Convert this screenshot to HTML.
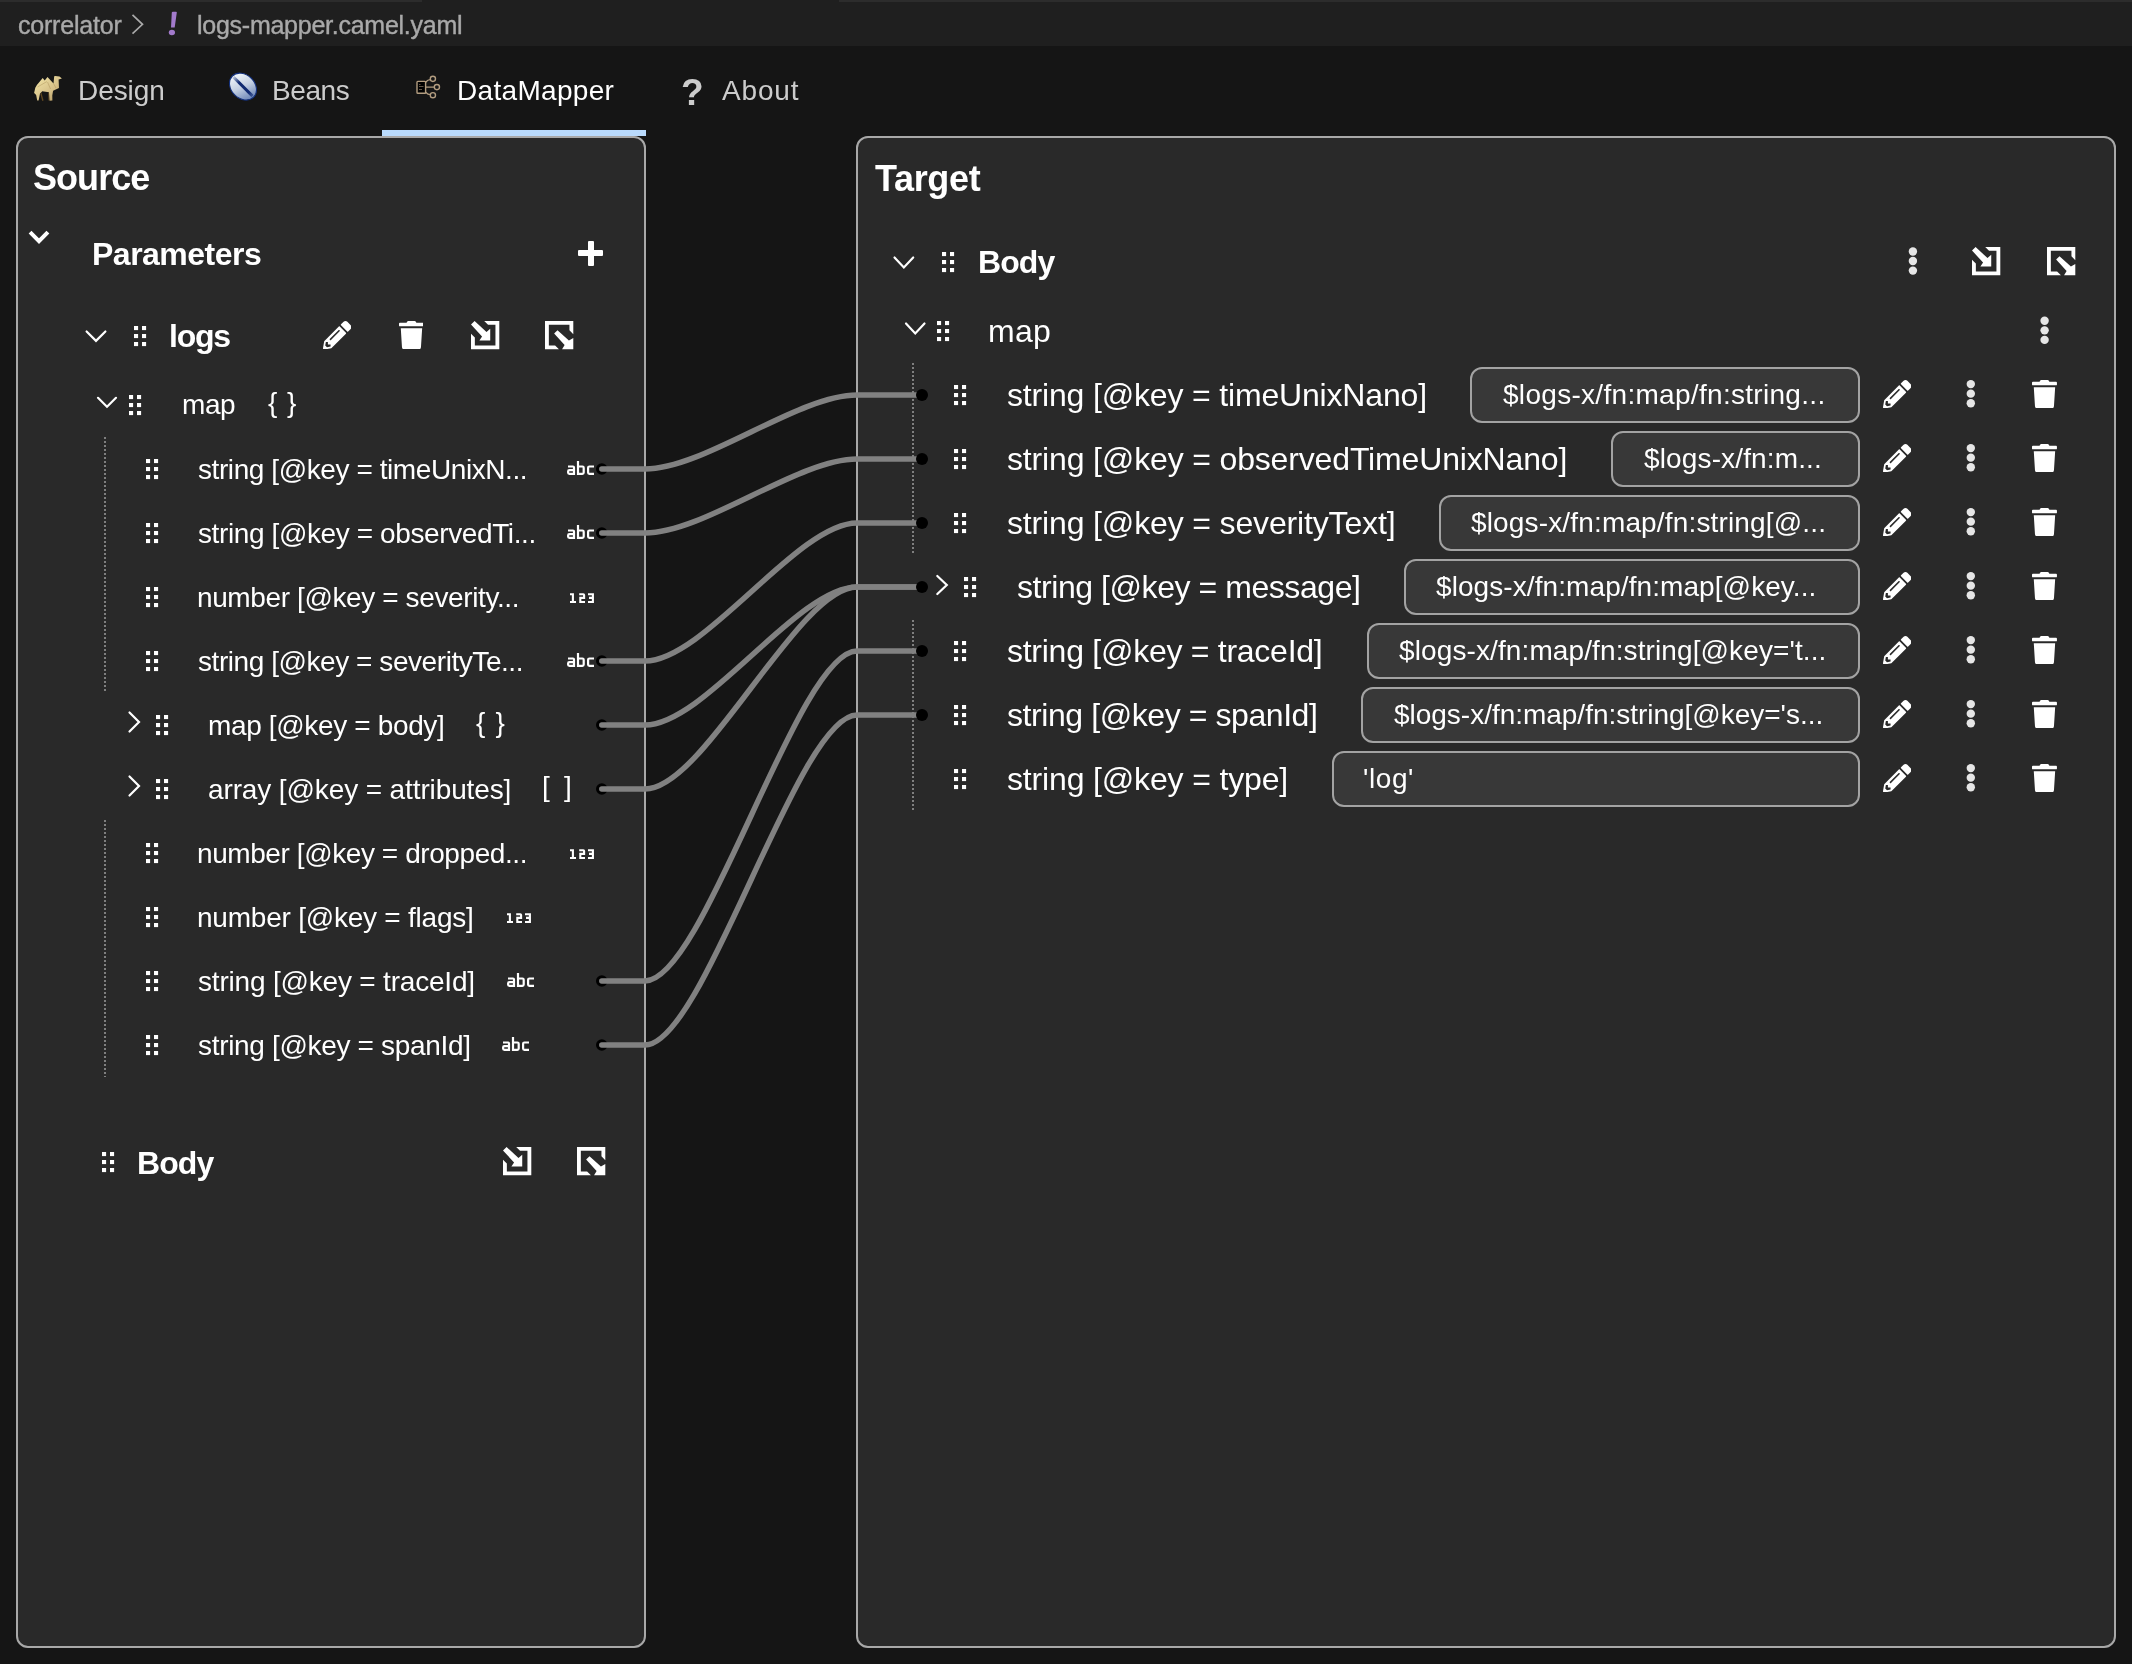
<!DOCTYPE html>
<html><head><meta charset="utf-8"><title>Kaoto DataMapper</title>
<style>html,body{margin:0;padding:0;background:#151515;width:2132px;height:1664px;overflow:hidden}
#root{position:relative;width:2132px;height:1664px;overflow:hidden;background:#151515;font-family:"Liberation Sans",sans-serif}</style></head>
<body><div id="root">
<div style="position:absolute;left:0;top:0;width:2132px;height:46px;background:#1f1f1f"></div><div style="position:absolute;left:0;top:0;width:422px;height:2px;background:#2c2c2c"></div><div style="position:absolute;left:839px;top:0;width:1293px;height:2px;background:#2c2c2c"></div><div style="position:absolute;left:16px;top:136px;width:630px;height:1512px;background:#292929;border-radius:12px"></div><div style="position:absolute;left:856px;top:136px;width:1260px;height:1512px;background:#292929;border-radius:12px"></div><div style="position:absolute;left:1470px;top:367px;width:390px;height:56px;box-sizing:border-box;background:#383838;border:2px solid #a3a3a3;border-radius:12px"></div><div style="position:absolute;left:1611px;top:431px;width:249px;height:56px;box-sizing:border-box;background:#383838;border:2px solid #a3a3a3;border-radius:12px"></div><div style="position:absolute;left:1439px;top:495px;width:421px;height:56px;box-sizing:border-box;background:#383838;border:2px solid #a3a3a3;border-radius:12px"></div><div style="position:absolute;left:1404px;top:559px;width:456px;height:56px;box-sizing:border-box;background:#383838;border:2px solid #a3a3a3;border-radius:12px"></div><div style="position:absolute;left:1366.5px;top:623px;width:493.5px;height:56px;box-sizing:border-box;background:#383838;border:2px solid #a3a3a3;border-radius:12px"></div><div style="position:absolute;left:1361.3px;top:687px;width:498.70000000000005px;height:56px;box-sizing:border-box;background:#383838;border:2px solid #a3a3a3;border-radius:12px"></div><div style="position:absolute;left:1331.5px;top:751px;width:528.5px;height:56px;box-sizing:border-box;background:#383838;border:2px solid #a3a3a3;border-radius:12px"></div><div style="position:absolute;left:104px;top:437px;width:2px;height:255px;background:repeating-linear-gradient(to bottom,#7f7f7f 0 2px,transparent 2px 4px)"></div><div style="position:absolute;left:104px;top:820px;width:2px;height:257px;background:repeating-linear-gradient(to bottom,#7f7f7f 0 2px,transparent 2px 4px)"></div><div style="position:absolute;left:912px;top:363px;width:2px;height:191px;background:repeating-linear-gradient(to bottom,#7f7f7f 0 2px,transparent 2px 4px)"></div><div style="position:absolute;left:912px;top:620px;width:2px;height:191px;background:repeating-linear-gradient(to bottom,#7f7f7f 0 2px,transparent 2px 4px)"></div><div style="position:absolute;left:382px;top:129.5px;width:264px;height:6.5px;background:#b9dafc"></div>
<div style="position:absolute;left:16px;top:136px;width:630px;height:1512px;box-sizing:border-box;border:2.2px solid #a8a8a8;border-radius:12px"></div><div style="position:absolute;left:856px;top:136px;width:1260px;height:1512px;box-sizing:border-box;border:2.2px solid #a8a8a8;border-radius:12px"></div>
<svg style="position:absolute;left:0;top:0" width="2132" height="1664"><g fill="#000"><circle cx="601.8" cy="469" r="5.8"/><circle cx="601.8" cy="533" r="5.8"/><circle cx="601.8" cy="661" r="5.8"/><circle cx="601.8" cy="725" r="5.8"/><circle cx="601.8" cy="789" r="5.8"/><circle cx="601.8" cy="981" r="5.8"/><circle cx="601.8" cy="1045" r="5.8"/></g><g fill="none" stroke="#818181" stroke-width="5.5" stroke-linecap="round"><path d="M601.8,469 H645 C704.36,469 797.64,395 857,395 H922"/><path d="M601.8,533 H645 C704.36,533 797.64,459 857,459 H922"/><path d="M601.8,661 H645 C704.36,661 797.64,523 857,523 H922"/><path d="M601.8,725 H645 C704.36,725 797.64,587 857,587 H922"/><path d="M601.8,789 H645 C704.36,789 797.64,587 857,587 H922"/><path d="M601.8,981 H645 C704.36,981 797.64,651 857,651 H922"/><path d="M601.8,1045 H645 C704.36,1045 797.64,715 857,715 H922"/></g><g fill="#000"><circle cx="922" cy="395" r="6"/><circle cx="922" cy="459" r="6"/><circle cx="922" cy="523" r="6"/><circle cx="922" cy="587" r="6"/><circle cx="922" cy="651" r="6"/><circle cx="922" cy="715" r="6"/></g></svg>
<svg style="position:absolute;left:0;top:0;overflow:visible" width="1" height="1"><polyline points="132.5,14.8 142.5,24.3 132.5,33.6" fill="none" stroke="#a9a9a9" stroke-width="1.7"/></svg><svg style="position:absolute;left:0;top:0;overflow:visible" width="1" height="1" fill="#a27acb"><path d="M171.8,12.4 Q172,11.8 172.8,11.8 H176 Q176.9,11.9 176.8,12.6 L174.7,27.4 H171 Z"/><ellipse cx="171.9" cy="32.5" rx="3.1" ry="2.7"/></svg><svg style="position:absolute;left:30px;top:70px;overflow:visible" width="36" height="34"><defs><linearGradient id="cg" x1="0" y1="0" x2="1" y2="1"><stop offset="0" stop-color="#f3e6a8"/><stop offset="0.6" stop-color="#d6c088"/><stop offset="1" stop-color="#a68a52"/></linearGradient></defs><path d="M11.3,22.3 L13.6,30.6 L12.2,30.9 L10.4,24 Z M18.2,22.4 L18.5,30.6 L19.6,30.6 L19.7,22.4 Z" fill="#5e4620"/><path d="M4.1,23.1 L5.3,17.8 L6.9,15.1 L12.7,8.0 L14.7,10.6 L17.5,6.9 L23.5,13.5 L24.2,6.3 L25.3,5.9 L29.5,6.5 L31.9,8.6 L28.6,9.4 L29,18 L23.1,20.8 L22.3,25.5 L22.4,30.6 L19.6,30.8 L19,22.2 L12.3,21.3 L10,23.5 L8.6,30.6 L7.2,30.6 L6.2,25.2 L5.3,24 Z" fill="url(#cg)"/><path d="M7.5,17 L17,11.5 M17.5,12 L20.5,19 M23.5,13.5 L26,18" stroke="#9c8048" stroke-width="0.6" opacity="0.6"/></svg><svg style="position:absolute;left:224px;top:68px;overflow:visible" width="38" height="36"><defs><linearGradient id="bg1" gradientUnits="userSpaceOnUse" x1="5" y1="14" x2="33" y2="23"><stop offset="0" stop-color="#f4f8fb"/><stop offset="0.5" stop-color="#c3cfe2"/><stop offset="1" stop-color="#6a84b6"/></linearGradient><linearGradient id="bs1" gradientUnits="userSpaceOnUse" x1="5" y1="0" x2="33" y2="0"><stop offset="0" stop-color="#0f2a74" stop-opacity="0.15"/><stop offset="0.3" stop-color="#102a72"/><stop offset="0.8" stop-color="#102a72"/><stop offset="1" stop-color="#0f2a74" stop-opacity="0.5"/></linearGradient></defs><g transform="rotate(45 19 18.6)"><ellipse cx="19" cy="18.6" rx="15" ry="11.8" fill="url(#bg1)" stroke="#13307c" stroke-width="1.1"/><path d="M5.5,18.6 H32.5" stroke="url(#bs1)" stroke-width="3"/></g></svg><svg style="position:absolute;left:410px;top:70px;overflow:visible" width="36" height="32" fill="none" stroke="#b39d80" stroke-width="1.4"><rect x="7" y="11.4" width="8.6" height="11.8" fill="#000" rx="0.8"/><path d="M15.6,17.1 H24.3 M15.6,12.2 Q18,9.5 20.4,9.6 M15.6,22.2 Q18,24.6 20.4,24.6" /><circle cx="22.9" cy="8.85" r="2.6"/><circle cx="26.9" cy="17.1" r="2.6"/><circle cx="22.9" cy="25.2" r="2.6"/><path d="M9,14.5 H10.5 M9,16.5 H13.5 M9,19.5 H12" stroke-width="0.9" opacity="0.6"/></svg><svg style="position:absolute;left:0;top:0;overflow:visible" width="1" height="1"><polyline points="31.5,233.6 39,241.2 46.5,233.6" fill="none" stroke="#fff" stroke-width="4" stroke-linecap="square"/></svg><div style="position:absolute;left:578.4px;top:250.3px;width:25px;height:5.5px;background:#fff;border-radius:1px"></div><div style="position:absolute;left:588.3px;top:240.5px;width:5.4px;height:25px;background:#fff;border-radius:1px"></div><svg style="position:absolute;left:0;top:0;overflow:visible" width="1" height="1"><polyline points="86.6,331.5 96.0,340.9 105.4,331.5" fill="none" stroke="#fff" stroke-width="2.2" stroke-linecap="round" stroke-linejoin="miter"/></svg><svg style="position:absolute;left:133.8px;top:325.9px;overflow:visible" width="13" height="21" fill="#ffffff"><rect x="0" y="0" width="4.1" height="4.1"/><rect x="8" y="0" width="4.1" height="4.1"/><rect x="0" y="8" width="4.1" height="4.1"/><rect x="8" y="8" width="4.1" height="4.1"/><rect x="0" y="16" width="4.1" height="4.1"/><rect x="8" y="16" width="4.1" height="4.1"/></svg><svg style="position:absolute;left:322.8px;top:320.6px" width="28.5" height="28.5" viewBox="0 0 512 512" fill="#fff"><path d="M497.9 142.1l-46.1 46.1c-4.7 4.7-12.3 4.7-17 0l-111-111c-4.7-4.7-4.7-12.3 0-17l46.1-46.1c18.7-18.7 49.1-18.7 67.9 0l60.1 60.1c18.8 18.7 18.8 49.1 0 67.9zM284.2 99.8L21.6 362.4.4 483.9c-2.9 16.4 11.4 30.6 27.8 27.8l121.5-21.3 262.6-262.6c4.7-4.7 4.7-12.3 0-17l-111-111c-4.8-4.7-12.4-4.7-17.1 0zM124.1 339.9c-5.5-5.5-5.5-14.3 0-19.8l154-154c5.5-5.5 14.3-5.5 19.8 0s5.5 14.3 0 19.8l-154 154c-5.5 5.5-14.3 5.5-19.8 0zM88 424h48v36.3l-64.5 11.3-31.1-31.1L51.7 376H88v48z"/></svg><svg style="position:absolute;left:398.5px;top:320.6px" width="24.94" height="28.5" viewBox="0 0 448 512" fill="#fff"><path d="M432 32H312l-9.4-18.7A24 24 0 0 0 281.1 0H166.8a23.72 23.72 0 0 0-21.4 13.3L136 32H16A16 16 0 0 0 0 48v32a16 16 0 0 0 16 16h416a16 16 0 0 0 16-16V48a16 16 0 0 0-16-16zM53.2 467a48 48 0 0 0 47.9 45h245.8a48 48 0 0 0 47.9-45L416 128H32z"/></svg><svg style="position:absolute;left:470.8px;top:320.8px;overflow:visible" width="28.3" height="28.3" fill="#fff"><path fill-rule="nonzero" d="M13.2,0 H28.3 V28.3 H0 V12.7 L3.85,16.55 V24.45 H24.45 V3.85 H17.05 Z M0,3.6 L3.6,0 L15.5,11.06 L19.23,7.69 L19.23,19.47 L8.41,19.47 L11.06,15.38 Z"/></svg><svg style="position:absolute;left:544.77px;top:320.77px;overflow:visible" width="28.3" height="28.3" fill="#fff"><path d="M0,0 H28.3 V13.2 L24.45,9.35 V3.85 H3.85 V24.45 H10.1 L13.95,28.3 H0 Z M9.13,12.5 L12.5,9.13 L23.9,19.6 L28.3,16.9 L28.3,28.3 L17.07,28.3 L19.6,23.9 Z"/></svg><svg style="position:absolute;left:0;top:0;overflow:visible" width="1" height="1"><polyline points="98,397.8 107.0,406.8 116,397.8" fill="none" stroke="#fff" stroke-width="2.2" stroke-linecap="round" stroke-linejoin="miter"/></svg><svg style="position:absolute;left:128.9px;top:394.9px;overflow:visible" width="13" height="21" fill="#ffffff"><rect x="0" y="0" width="4.1" height="4.1"/><rect x="8" y="0" width="4.1" height="4.1"/><rect x="0" y="8" width="4.1" height="4.1"/><rect x="8" y="8" width="4.1" height="4.1"/><rect x="0" y="16" width="4.1" height="4.1"/><rect x="8" y="16" width="4.1" height="4.1"/></svg><svg style="position:absolute;left:145.8px;top:459px;overflow:visible" width="13" height="21" fill="#ffffff"><rect x="0" y="0" width="4.1" height="4.1"/><rect x="8" y="0" width="4.1" height="4.1"/><rect x="0" y="8" width="4.1" height="4.1"/><rect x="8" y="8" width="4.1" height="4.1"/><rect x="0" y="16" width="4.1" height="4.1"/><rect x="8" y="16" width="4.1" height="4.1"/></svg><svg style="position:absolute;left:567px;top:461px;overflow:visible" width="28" height="15"><path d="M1,5.5 H6 Q7,5.5 7,6.5 V14 M7,9.2 H2.4 Q1.1,9.2 1.1,10.5 V11.6 Q1.1,12.9 2.4,12.9 H7 M11,0 V14 M11,5.5 H15.4 Q16.7,5.5 16.7,6.8 V11.6 Q16.7,12.9 15.4,12.9 H11 M27,5.5 H22.4 Q21.1,5.5 21.1,6.8 V11.6 Q21.1,12.9 22.4,12.9 H27" fill="none" stroke="#fff" stroke-width="2.2"/></svg><svg style="position:absolute;left:145.8px;top:523px;overflow:visible" width="13" height="21" fill="#ffffff"><rect x="0" y="0" width="4.1" height="4.1"/><rect x="8" y="0" width="4.1" height="4.1"/><rect x="0" y="8" width="4.1" height="4.1"/><rect x="8" y="8" width="4.1" height="4.1"/><rect x="0" y="16" width="4.1" height="4.1"/><rect x="8" y="16" width="4.1" height="4.1"/></svg><svg style="position:absolute;left:567px;top:525px;overflow:visible" width="28" height="15"><path d="M1,5.5 H6 Q7,5.5 7,6.5 V14 M7,9.2 H2.4 Q1.1,9.2 1.1,10.5 V11.6 Q1.1,12.9 2.4,12.9 H7 M11,0 V14 M11,5.5 H15.4 Q16.7,5.5 16.7,6.8 V11.6 Q16.7,12.9 15.4,12.9 H11 M27,5.5 H22.4 Q21.1,5.5 21.1,6.8 V11.6 Q21.1,12.9 22.4,12.9 H27" fill="none" stroke="#fff" stroke-width="2.2"/></svg><svg style="position:absolute;left:145.8px;top:587px;overflow:visible" width="13" height="21" fill="#ffffff"><rect x="0" y="0" width="4.1" height="4.1"/><rect x="8" y="0" width="4.1" height="4.1"/><rect x="0" y="8" width="4.1" height="4.1"/><rect x="8" y="8" width="4.1" height="4.1"/><rect x="0" y="16" width="4.1" height="4.1"/><rect x="8" y="16" width="4.1" height="4.1"/></svg><svg style="position:absolute;left:569.85px;top:593px;overflow:visible" width="25" height="11"><path d="M0,1.2 H2.9 V9 M0,9 H6 M9.2,1.2 H13.3 Q14.1,1.2 14.1,2 V4.9 H10.3 V9 H15 M18,1.2 H22.9 V9 H18 M19,4.9 H22.9" fill="none" stroke="#fff" stroke-width="2.1"/></svg><svg style="position:absolute;left:145.8px;top:651px;overflow:visible" width="13" height="21" fill="#ffffff"><rect x="0" y="0" width="4.1" height="4.1"/><rect x="8" y="0" width="4.1" height="4.1"/><rect x="0" y="8" width="4.1" height="4.1"/><rect x="8" y="8" width="4.1" height="4.1"/><rect x="0" y="16" width="4.1" height="4.1"/><rect x="8" y="16" width="4.1" height="4.1"/></svg><svg style="position:absolute;left:567px;top:653px;overflow:visible" width="28" height="15"><path d="M1,5.5 H6 Q7,5.5 7,6.5 V14 M7,9.2 H2.4 Q1.1,9.2 1.1,10.5 V11.6 Q1.1,12.9 2.4,12.9 H7 M11,0 V14 M11,5.5 H15.4 Q16.7,5.5 16.7,6.8 V11.6 Q16.7,12.9 15.4,12.9 H11 M27,5.5 H22.4 Q21.1,5.5 21.1,6.8 V11.6 Q21.1,12.9 22.4,12.9 H27" fill="none" stroke="#fff" stroke-width="2.2"/></svg><svg style="position:absolute;left:0;top:0;overflow:visible" width="1" height="1"><polyline points="129.5,712.5 139,722.0 129.5,731.5" fill="none" stroke="#fff" stroke-width="2.2" stroke-linecap="round" stroke-linejoin="miter"/></svg><svg style="position:absolute;left:155.6px;top:715px;overflow:visible" width="13" height="21" fill="#ffffff"><rect x="0" y="0" width="4.1" height="4.1"/><rect x="8" y="0" width="4.1" height="4.1"/><rect x="0" y="8" width="4.1" height="4.1"/><rect x="8" y="8" width="4.1" height="4.1"/><rect x="0" y="16" width="4.1" height="4.1"/><rect x="8" y="16" width="4.1" height="4.1"/></svg><svg style="position:absolute;left:0;top:0;overflow:visible" width="1" height="1"><polyline points="129.5,776.5 139,786.0 129.5,795.5" fill="none" stroke="#fff" stroke-width="2.2" stroke-linecap="round" stroke-linejoin="miter"/></svg><svg style="position:absolute;left:155.6px;top:779px;overflow:visible" width="13" height="21" fill="#ffffff"><rect x="0" y="0" width="4.1" height="4.1"/><rect x="8" y="0" width="4.1" height="4.1"/><rect x="0" y="8" width="4.1" height="4.1"/><rect x="8" y="8" width="4.1" height="4.1"/><rect x="0" y="16" width="4.1" height="4.1"/><rect x="8" y="16" width="4.1" height="4.1"/></svg><svg style="position:absolute;left:145.8px;top:843px;overflow:visible" width="13" height="21" fill="#ffffff"><rect x="0" y="0" width="4.1" height="4.1"/><rect x="8" y="0" width="4.1" height="4.1"/><rect x="0" y="8" width="4.1" height="4.1"/><rect x="8" y="8" width="4.1" height="4.1"/><rect x="0" y="16" width="4.1" height="4.1"/><rect x="8" y="16" width="4.1" height="4.1"/></svg><svg style="position:absolute;left:569.85px;top:849px;overflow:visible" width="25" height="11"><path d="M0,1.2 H2.9 V9 M0,9 H6 M9.2,1.2 H13.3 Q14.1,1.2 14.1,2 V4.9 H10.3 V9 H15 M18,1.2 H22.9 V9 H18 M19,4.9 H22.9" fill="none" stroke="#fff" stroke-width="2.1"/></svg><svg style="position:absolute;left:145.8px;top:907px;overflow:visible" width="13" height="21" fill="#ffffff"><rect x="0" y="0" width="4.1" height="4.1"/><rect x="8" y="0" width="4.1" height="4.1"/><rect x="0" y="8" width="4.1" height="4.1"/><rect x="8" y="8" width="4.1" height="4.1"/><rect x="0" y="16" width="4.1" height="4.1"/><rect x="8" y="16" width="4.1" height="4.1"/></svg><svg style="position:absolute;left:506.5px;top:913px;overflow:visible" width="25" height="11"><path d="M0,1.2 H2.9 V9 M0,9 H6 M9.2,1.2 H13.3 Q14.1,1.2 14.1,2 V4.9 H10.3 V9 H15 M18,1.2 H22.9 V9 H18 M19,4.9 H22.9" fill="none" stroke="#fff" stroke-width="2.1"/></svg><svg style="position:absolute;left:145.8px;top:971px;overflow:visible" width="13" height="21" fill="#ffffff"><rect x="0" y="0" width="4.1" height="4.1"/><rect x="8" y="0" width="4.1" height="4.1"/><rect x="0" y="8" width="4.1" height="4.1"/><rect x="8" y="8" width="4.1" height="4.1"/><rect x="0" y="16" width="4.1" height="4.1"/><rect x="8" y="16" width="4.1" height="4.1"/></svg><svg style="position:absolute;left:506.5px;top:973px;overflow:visible" width="28" height="15"><path d="M1,5.5 H6 Q7,5.5 7,6.5 V14 M7,9.2 H2.4 Q1.1,9.2 1.1,10.5 V11.6 Q1.1,12.9 2.4,12.9 H7 M11,0 V14 M11,5.5 H15.4 Q16.7,5.5 16.7,6.8 V11.6 Q16.7,12.9 15.4,12.9 H11 M27,5.5 H22.4 Q21.1,5.5 21.1,6.8 V11.6 Q21.1,12.9 22.4,12.9 H27" fill="none" stroke="#fff" stroke-width="2.2"/></svg><svg style="position:absolute;left:145.8px;top:1035px;overflow:visible" width="13" height="21" fill="#ffffff"><rect x="0" y="0" width="4.1" height="4.1"/><rect x="8" y="0" width="4.1" height="4.1"/><rect x="0" y="8" width="4.1" height="4.1"/><rect x="8" y="8" width="4.1" height="4.1"/><rect x="0" y="16" width="4.1" height="4.1"/><rect x="8" y="16" width="4.1" height="4.1"/></svg><svg style="position:absolute;left:501.7px;top:1037px;overflow:visible" width="28" height="15"><path d="M1,5.5 H6 Q7,5.5 7,6.5 V14 M7,9.2 H2.4 Q1.1,9.2 1.1,10.5 V11.6 Q1.1,12.9 2.4,12.9 H7 M11,0 V14 M11,5.5 H15.4 Q16.7,5.5 16.7,6.8 V11.6 Q16.7,12.9 15.4,12.9 H11 M27,5.5 H22.4 Q21.1,5.5 21.1,6.8 V11.6 Q21.1,12.9 22.4,12.9 H27" fill="none" stroke="#fff" stroke-width="2.2"/></svg><svg style="position:absolute;left:101.8px;top:1152px;overflow:visible" width="13" height="21" fill="#ffffff"><rect x="0" y="0" width="4.1" height="4.1"/><rect x="8" y="0" width="4.1" height="4.1"/><rect x="0" y="8" width="4.1" height="4.1"/><rect x="8" y="8" width="4.1" height="4.1"/><rect x="0" y="16" width="4.1" height="4.1"/><rect x="8" y="16" width="4.1" height="4.1"/></svg><svg style="position:absolute;left:502.7px;top:1146.8px;overflow:visible" width="28.3" height="28.3" fill="#fff"><path fill-rule="nonzero" d="M13.2,0 H28.3 V28.3 H0 V12.7 L3.85,16.55 V24.45 H24.45 V3.85 H17.05 Z M0,3.6 L3.6,0 L15.5,11.06 L19.23,7.69 L19.23,19.47 L8.41,19.47 L11.06,15.38 Z"/></svg><svg style="position:absolute;left:577px;top:1146.8px;overflow:visible" width="28.3" height="28.3" fill="#fff"><path d="M0,0 H28.3 V13.2 L24.45,9.35 V3.85 H3.85 V24.45 H10.1 L13.95,28.3 H0 Z M9.13,12.5 L12.5,9.13 L23.9,19.6 L28.3,16.9 L28.3,28.3 L17.07,28.3 L19.6,23.9 Z"/></svg><svg style="position:absolute;left:0;top:0;overflow:visible" width="1" height="1"><polyline points="894.5,257.5 903.85,267.5 913.2,257.5" fill="none" stroke="#fff" stroke-width="2.2" stroke-linecap="round" stroke-linejoin="miter"/></svg><svg style="position:absolute;left:941.5px;top:252px;overflow:visible" width="13" height="21" fill="#ffffff"><rect x="0" y="0" width="4.1" height="4.1"/><rect x="8" y="0" width="4.1" height="4.1"/><rect x="0" y="8" width="4.1" height="4.1"/><rect x="8" y="8" width="4.1" height="4.1"/><rect x="0" y="16" width="4.1" height="4.1"/><rect x="8" y="16" width="4.1" height="4.1"/></svg><svg style="position:absolute;left:0;top:0;overflow:visible" width="1" height="1" fill="#e6e6e6"><circle cx="1912.9" cy="251.5" r="4.2"/><circle cx="1912.9" cy="261.05" r="4.2"/><circle cx="1912.9" cy="270.6" r="4.2"/></svg><svg style="position:absolute;left:1972.3px;top:246.9px;overflow:visible" width="28.3" height="28.3" fill="#fff"><path fill-rule="nonzero" d="M13.2,0 H28.3 V28.3 H0 V12.7 L3.85,16.55 V24.45 H24.45 V3.85 H17.05 Z M0,3.6 L3.6,0 L15.5,11.06 L19.23,7.69 L19.23,19.47 L8.41,19.47 L11.06,15.38 Z"/></svg><svg style="position:absolute;left:2046.8px;top:246.9px;overflow:visible" width="28.3" height="28.3" fill="#fff"><path d="M0,0 H28.3 V13.2 L24.45,9.35 V3.85 H3.85 V24.45 H10.1 L13.95,28.3 H0 Z M9.13,12.5 L12.5,9.13 L23.9,19.6 L28.3,16.9 L28.3,28.3 L17.07,28.3 L19.6,23.9 Z"/></svg><svg style="position:absolute;left:0;top:0;overflow:visible" width="1" height="1"><polyline points="906,323.5 915.25,333.5 924.5,323.5" fill="none" stroke="#fff" stroke-width="2.2" stroke-linecap="round" stroke-linejoin="miter"/></svg><svg style="position:absolute;left:936.7px;top:320.5px;overflow:visible" width="13" height="21" fill="#ffffff"><rect x="0" y="0" width="4.1" height="4.1"/><rect x="8" y="0" width="4.1" height="4.1"/><rect x="0" y="8" width="4.1" height="4.1"/><rect x="8" y="8" width="4.1" height="4.1"/><rect x="0" y="16" width="4.1" height="4.1"/><rect x="8" y="16" width="4.1" height="4.1"/></svg><svg style="position:absolute;left:0;top:0;overflow:visible" width="1" height="1" fill="#e6e6e6"><circle cx="2044.6" cy="320.8" r="4.2"/><circle cx="2044.6" cy="330.35" r="4.2"/><circle cx="2044.6" cy="339.90000000000003" r="4.2"/></svg><svg style="position:absolute;left:953.5px;top:385px;overflow:visible" width="13" height="21" fill="#ffffff"><rect x="0" y="0" width="4.1" height="4.1"/><rect x="8" y="0" width="4.1" height="4.1"/><rect x="0" y="8" width="4.1" height="4.1"/><rect x="8" y="8" width="4.1" height="4.1"/><rect x="0" y="16" width="4.1" height="4.1"/><rect x="8" y="16" width="4.1" height="4.1"/></svg><svg style="position:absolute;left:1882.6px;top:379.7px" width="28.5" height="28.5" viewBox="0 0 512 512" fill="#fff"><path d="M497.9 142.1l-46.1 46.1c-4.7 4.7-12.3 4.7-17 0l-111-111c-4.7-4.7-4.7-12.3 0-17l46.1-46.1c18.7-18.7 49.1-18.7 67.9 0l60.1 60.1c18.8 18.7 18.8 49.1 0 67.9zM284.2 99.8L21.6 362.4.4 483.9c-2.9 16.4 11.4 30.6 27.8 27.8l121.5-21.3 262.6-262.6c4.7-4.7 4.7-12.3 0-17l-111-111c-4.8-4.7-12.4-4.7-17.1 0zM124.1 339.9c-5.5-5.5-5.5-14.3 0-19.8l154-154c5.5-5.5 14.3-5.5 19.8 0s5.5 14.3 0 19.8l-154 154c-5.5 5.5-14.3 5.5-19.8 0zM88 424h48v36.3l-64.5 11.3-31.1-31.1L51.7 376H88v48z"/></svg><svg style="position:absolute;left:0;top:0;overflow:visible" width="1" height="1" fill="#e6e6e6"><circle cx="1970.8" cy="384.1" r="4.2"/><circle cx="1970.8" cy="393.65000000000003" r="4.2"/><circle cx="1970.8" cy="403.20000000000005" r="4.2"/></svg><svg style="position:absolute;left:2032.3px;top:379.5px" width="24.94" height="28.5" viewBox="0 0 448 512" fill="#fff"><path d="M432 32H312l-9.4-18.7A24 24 0 0 0 281.1 0H166.8a23.72 23.72 0 0 0-21.4 13.3L136 32H16A16 16 0 0 0 0 48v32a16 16 0 0 0 16 16h416a16 16 0 0 0 16-16V48a16 16 0 0 0-16-16zM53.2 467a48 48 0 0 0 47.9 45h245.8a48 48 0 0 0 47.9-45L416 128H32z"/></svg><svg style="position:absolute;left:953.5px;top:449px;overflow:visible" width="13" height="21" fill="#ffffff"><rect x="0" y="0" width="4.1" height="4.1"/><rect x="8" y="0" width="4.1" height="4.1"/><rect x="0" y="8" width="4.1" height="4.1"/><rect x="8" y="8" width="4.1" height="4.1"/><rect x="0" y="16" width="4.1" height="4.1"/><rect x="8" y="16" width="4.1" height="4.1"/></svg><svg style="position:absolute;left:1882.6px;top:443.7px" width="28.5" height="28.5" viewBox="0 0 512 512" fill="#fff"><path d="M497.9 142.1l-46.1 46.1c-4.7 4.7-12.3 4.7-17 0l-111-111c-4.7-4.7-4.7-12.3 0-17l46.1-46.1c18.7-18.7 49.1-18.7 67.9 0l60.1 60.1c18.8 18.7 18.8 49.1 0 67.9zM284.2 99.8L21.6 362.4.4 483.9c-2.9 16.4 11.4 30.6 27.8 27.8l121.5-21.3 262.6-262.6c4.7-4.7 4.7-12.3 0-17l-111-111c-4.8-4.7-12.4-4.7-17.1 0zM124.1 339.9c-5.5-5.5-5.5-14.3 0-19.8l154-154c5.5-5.5 14.3-5.5 19.8 0s5.5 14.3 0 19.8l-154 154c-5.5 5.5-14.3 5.5-19.8 0zM88 424h48v36.3l-64.5 11.3-31.1-31.1L51.7 376H88v48z"/></svg><svg style="position:absolute;left:0;top:0;overflow:visible" width="1" height="1" fill="#e6e6e6"><circle cx="1970.8" cy="448.1" r="4.2"/><circle cx="1970.8" cy="457.65000000000003" r="4.2"/><circle cx="1970.8" cy="467.20000000000005" r="4.2"/></svg><svg style="position:absolute;left:2032.3px;top:443.5px" width="24.94" height="28.5" viewBox="0 0 448 512" fill="#fff"><path d="M432 32H312l-9.4-18.7A24 24 0 0 0 281.1 0H166.8a23.72 23.72 0 0 0-21.4 13.3L136 32H16A16 16 0 0 0 0 48v32a16 16 0 0 0 16 16h416a16 16 0 0 0 16-16V48a16 16 0 0 0-16-16zM53.2 467a48 48 0 0 0 47.9 45h245.8a48 48 0 0 0 47.9-45L416 128H32z"/></svg><svg style="position:absolute;left:953.5px;top:513px;overflow:visible" width="13" height="21" fill="#ffffff"><rect x="0" y="0" width="4.1" height="4.1"/><rect x="8" y="0" width="4.1" height="4.1"/><rect x="0" y="8" width="4.1" height="4.1"/><rect x="8" y="8" width="4.1" height="4.1"/><rect x="0" y="16" width="4.1" height="4.1"/><rect x="8" y="16" width="4.1" height="4.1"/></svg><svg style="position:absolute;left:1882.6px;top:507.7px" width="28.5" height="28.5" viewBox="0 0 512 512" fill="#fff"><path d="M497.9 142.1l-46.1 46.1c-4.7 4.7-12.3 4.7-17 0l-111-111c-4.7-4.7-4.7-12.3 0-17l46.1-46.1c18.7-18.7 49.1-18.7 67.9 0l60.1 60.1c18.8 18.7 18.8 49.1 0 67.9zM284.2 99.8L21.6 362.4.4 483.9c-2.9 16.4 11.4 30.6 27.8 27.8l121.5-21.3 262.6-262.6c4.7-4.7 4.7-12.3 0-17l-111-111c-4.8-4.7-12.4-4.7-17.1 0zM124.1 339.9c-5.5-5.5-5.5-14.3 0-19.8l154-154c5.5-5.5 14.3-5.5 19.8 0s5.5 14.3 0 19.8l-154 154c-5.5 5.5-14.3 5.5-19.8 0zM88 424h48v36.3l-64.5 11.3-31.1-31.1L51.7 376H88v48z"/></svg><svg style="position:absolute;left:0;top:0;overflow:visible" width="1" height="1" fill="#e6e6e6"><circle cx="1970.8" cy="512.1" r="4.2"/><circle cx="1970.8" cy="521.65" r="4.2"/><circle cx="1970.8" cy="531.2" r="4.2"/></svg><svg style="position:absolute;left:2032.3px;top:507.5px" width="24.94" height="28.5" viewBox="0 0 448 512" fill="#fff"><path d="M432 32H312l-9.4-18.7A24 24 0 0 0 281.1 0H166.8a23.72 23.72 0 0 0-21.4 13.3L136 32H16A16 16 0 0 0 0 48v32a16 16 0 0 0 16 16h416a16 16 0 0 0 16-16V48a16 16 0 0 0-16-16zM53.2 467a48 48 0 0 0 47.9 45h245.8a48 48 0 0 0 47.9-45L416 128H32z"/></svg><svg style="position:absolute;left:0;top:0;overflow:visible" width="1" height="1"><polyline points="937.3,576 946.8,585.0 937.3,594" fill="none" stroke="#fff" stroke-width="2.2" stroke-linecap="round" stroke-linejoin="miter"/></svg><svg style="position:absolute;left:963.6px;top:577px;overflow:visible" width="13" height="21" fill="#ffffff"><rect x="0" y="0" width="4.1" height="4.1"/><rect x="8" y="0" width="4.1" height="4.1"/><rect x="0" y="8" width="4.1" height="4.1"/><rect x="8" y="8" width="4.1" height="4.1"/><rect x="0" y="16" width="4.1" height="4.1"/><rect x="8" y="16" width="4.1" height="4.1"/></svg><svg style="position:absolute;left:1882.6px;top:571.7px" width="28.5" height="28.5" viewBox="0 0 512 512" fill="#fff"><path d="M497.9 142.1l-46.1 46.1c-4.7 4.7-12.3 4.7-17 0l-111-111c-4.7-4.7-4.7-12.3 0-17l46.1-46.1c18.7-18.7 49.1-18.7 67.9 0l60.1 60.1c18.8 18.7 18.8 49.1 0 67.9zM284.2 99.8L21.6 362.4.4 483.9c-2.9 16.4 11.4 30.6 27.8 27.8l121.5-21.3 262.6-262.6c4.7-4.7 4.7-12.3 0-17l-111-111c-4.8-4.7-12.4-4.7-17.1 0zM124.1 339.9c-5.5-5.5-5.5-14.3 0-19.8l154-154c5.5-5.5 14.3-5.5 19.8 0s5.5 14.3 0 19.8l-154 154c-5.5 5.5-14.3 5.5-19.8 0zM88 424h48v36.3l-64.5 11.3-31.1-31.1L51.7 376H88v48z"/></svg><svg style="position:absolute;left:0;top:0;overflow:visible" width="1" height="1" fill="#e6e6e6"><circle cx="1970.8" cy="576.1" r="4.2"/><circle cx="1970.8" cy="585.65" r="4.2"/><circle cx="1970.8" cy="595.2" r="4.2"/></svg><svg style="position:absolute;left:2032.3px;top:571.5px" width="24.94" height="28.5" viewBox="0 0 448 512" fill="#fff"><path d="M432 32H312l-9.4-18.7A24 24 0 0 0 281.1 0H166.8a23.72 23.72 0 0 0-21.4 13.3L136 32H16A16 16 0 0 0 0 48v32a16 16 0 0 0 16 16h416a16 16 0 0 0 16-16V48a16 16 0 0 0-16-16zM53.2 467a48 48 0 0 0 47.9 45h245.8a48 48 0 0 0 47.9-45L416 128H32z"/></svg><svg style="position:absolute;left:953.5px;top:641px;overflow:visible" width="13" height="21" fill="#ffffff"><rect x="0" y="0" width="4.1" height="4.1"/><rect x="8" y="0" width="4.1" height="4.1"/><rect x="0" y="8" width="4.1" height="4.1"/><rect x="8" y="8" width="4.1" height="4.1"/><rect x="0" y="16" width="4.1" height="4.1"/><rect x="8" y="16" width="4.1" height="4.1"/></svg><svg style="position:absolute;left:1882.6px;top:635.7px" width="28.5" height="28.5" viewBox="0 0 512 512" fill="#fff"><path d="M497.9 142.1l-46.1 46.1c-4.7 4.7-12.3 4.7-17 0l-111-111c-4.7-4.7-4.7-12.3 0-17l46.1-46.1c18.7-18.7 49.1-18.7 67.9 0l60.1 60.1c18.8 18.7 18.8 49.1 0 67.9zM284.2 99.8L21.6 362.4.4 483.9c-2.9 16.4 11.4 30.6 27.8 27.8l121.5-21.3 262.6-262.6c4.7-4.7 4.7-12.3 0-17l-111-111c-4.8-4.7-12.4-4.7-17.1 0zM124.1 339.9c-5.5-5.5-5.5-14.3 0-19.8l154-154c5.5-5.5 14.3-5.5 19.8 0s5.5 14.3 0 19.8l-154 154c-5.5 5.5-14.3 5.5-19.8 0zM88 424h48v36.3l-64.5 11.3-31.1-31.1L51.7 376H88v48z"/></svg><svg style="position:absolute;left:0;top:0;overflow:visible" width="1" height="1" fill="#e6e6e6"><circle cx="1970.8" cy="640.1" r="4.2"/><circle cx="1970.8" cy="649.65" r="4.2"/><circle cx="1970.8" cy="659.2" r="4.2"/></svg><svg style="position:absolute;left:2032.3px;top:635.5px" width="24.94" height="28.5" viewBox="0 0 448 512" fill="#fff"><path d="M432 32H312l-9.4-18.7A24 24 0 0 0 281.1 0H166.8a23.72 23.72 0 0 0-21.4 13.3L136 32H16A16 16 0 0 0 0 48v32a16 16 0 0 0 16 16h416a16 16 0 0 0 16-16V48a16 16 0 0 0-16-16zM53.2 467a48 48 0 0 0 47.9 45h245.8a48 48 0 0 0 47.9-45L416 128H32z"/></svg><svg style="position:absolute;left:953.5px;top:705px;overflow:visible" width="13" height="21" fill="#ffffff"><rect x="0" y="0" width="4.1" height="4.1"/><rect x="8" y="0" width="4.1" height="4.1"/><rect x="0" y="8" width="4.1" height="4.1"/><rect x="8" y="8" width="4.1" height="4.1"/><rect x="0" y="16" width="4.1" height="4.1"/><rect x="8" y="16" width="4.1" height="4.1"/></svg><svg style="position:absolute;left:1882.6px;top:699.7px" width="28.5" height="28.5" viewBox="0 0 512 512" fill="#fff"><path d="M497.9 142.1l-46.1 46.1c-4.7 4.7-12.3 4.7-17 0l-111-111c-4.7-4.7-4.7-12.3 0-17l46.1-46.1c18.7-18.7 49.1-18.7 67.9 0l60.1 60.1c18.8 18.7 18.8 49.1 0 67.9zM284.2 99.8L21.6 362.4.4 483.9c-2.9 16.4 11.4 30.6 27.8 27.8l121.5-21.3 262.6-262.6c4.7-4.7 4.7-12.3 0-17l-111-111c-4.8-4.7-12.4-4.7-17.1 0zM124.1 339.9c-5.5-5.5-5.5-14.3 0-19.8l154-154c5.5-5.5 14.3-5.5 19.8 0s5.5 14.3 0 19.8l-154 154c-5.5 5.5-14.3 5.5-19.8 0zM88 424h48v36.3l-64.5 11.3-31.1-31.1L51.7 376H88v48z"/></svg><svg style="position:absolute;left:0;top:0;overflow:visible" width="1" height="1" fill="#e6e6e6"><circle cx="1970.8" cy="704.1" r="4.2"/><circle cx="1970.8" cy="713.65" r="4.2"/><circle cx="1970.8" cy="723.2" r="4.2"/></svg><svg style="position:absolute;left:2032.3px;top:699.5px" width="24.94" height="28.5" viewBox="0 0 448 512" fill="#fff"><path d="M432 32H312l-9.4-18.7A24 24 0 0 0 281.1 0H166.8a23.72 23.72 0 0 0-21.4 13.3L136 32H16A16 16 0 0 0 0 48v32a16 16 0 0 0 16 16h416a16 16 0 0 0 16-16V48a16 16 0 0 0-16-16zM53.2 467a48 48 0 0 0 47.9 45h245.8a48 48 0 0 0 47.9-45L416 128H32z"/></svg><svg style="position:absolute;left:953.5px;top:769px;overflow:visible" width="13" height="21" fill="#ffffff"><rect x="0" y="0" width="4.1" height="4.1"/><rect x="8" y="0" width="4.1" height="4.1"/><rect x="0" y="8" width="4.1" height="4.1"/><rect x="8" y="8" width="4.1" height="4.1"/><rect x="0" y="16" width="4.1" height="4.1"/><rect x="8" y="16" width="4.1" height="4.1"/></svg><svg style="position:absolute;left:1882.6px;top:763.7px" width="28.5" height="28.5" viewBox="0 0 512 512" fill="#fff"><path d="M497.9 142.1l-46.1 46.1c-4.7 4.7-12.3 4.7-17 0l-111-111c-4.7-4.7-4.7-12.3 0-17l46.1-46.1c18.7-18.7 49.1-18.7 67.9 0l60.1 60.1c18.8 18.7 18.8 49.1 0 67.9zM284.2 99.8L21.6 362.4.4 483.9c-2.9 16.4 11.4 30.6 27.8 27.8l121.5-21.3 262.6-262.6c4.7-4.7 4.7-12.3 0-17l-111-111c-4.8-4.7-12.4-4.7-17.1 0zM124.1 339.9c-5.5-5.5-5.5-14.3 0-19.8l154-154c5.5-5.5 14.3-5.5 19.8 0s5.5 14.3 0 19.8l-154 154c-5.5 5.5-14.3 5.5-19.8 0zM88 424h48v36.3l-64.5 11.3-31.1-31.1L51.7 376H88v48z"/></svg><svg style="position:absolute;left:0;top:0;overflow:visible" width="1" height="1" fill="#e6e6e6"><circle cx="1970.8" cy="768.1" r="4.2"/><circle cx="1970.8" cy="777.65" r="4.2"/><circle cx="1970.8" cy="787.2" r="4.2"/></svg><svg style="position:absolute;left:2032.3px;top:763.5px" width="24.94" height="28.5" viewBox="0 0 448 512" fill="#fff"><path d="M432 32H312l-9.4-18.7A24 24 0 0 0 281.1 0H166.8a23.72 23.72 0 0 0-21.4 13.3L136 32H16A16 16 0 0 0 0 48v32a16 16 0 0 0 16 16h416a16 16 0 0 0 16-16V48a16 16 0 0 0-16-16zM53.2 467a48 48 0 0 0 47.9 45h245.8a48 48 0 0 0 47.9-45L416 128H32z"/></svg>
<div style="position:absolute;left:17.60px;top:12.64px;font:normal normal 25px/1 'Liberation Sans',sans-serif;color:#a9a9a9;letter-spacing:-0.207px;white-space:pre;will-change:transform;-webkit-text-stroke:0.4px #a9a9a9">correlator</div><div style="position:absolute;left:197.00px;top:12.64px;font:normal normal 25px/1 'Liberation Sans',sans-serif;color:#a9a9a9;letter-spacing:-0.256px;white-space:pre;will-change:transform;-webkit-text-stroke:0.4px #a9a9a9">logs-mapper.camel.yaml</div><div style="position:absolute;left:77.80px;top:77.40px;font:normal normal 28px/1 'Liberation Sans',sans-serif;color:#cccccc;letter-spacing:-0.057px;white-space:pre;will-change:transform">Design</div><div style="position:absolute;left:272.30px;top:77.40px;font:normal normal 28px/1 'Liberation Sans',sans-serif;color:#cccccc;letter-spacing:-0.423px;white-space:pre;will-change:transform">Beans</div><div style="position:absolute;left:456.60px;top:77.40px;font:normal normal 28px/1 'Liberation Sans',sans-serif;color:#ffffff;letter-spacing:0.316px;white-space:pre;will-change:transform">DataMapper</div><div style="position:absolute;left:722.00px;top:77.40px;font:normal normal 28px/1 'Liberation Sans',sans-serif;color:#cccccc;letter-spacing:0.827px;white-space:pre;will-change:transform">About</div><div style="position:absolute;left:681.00px;top:73.58px;font:normal bold 37px/1 'Liberation Sans',sans-serif;color:#cccccc;letter-spacing:0.000px;white-space:pre;will-change:transform">?</div><div style="position:absolute;left:32.70px;top:159.83px;font:normal bold 36px/1 'Liberation Sans',sans-serif;color:#ffffff;letter-spacing:-0.945px;white-space:pre;will-change:transform">Source</div><div style="position:absolute;left:92.00px;top:237.91px;font:normal bold 32px/1 'Liberation Sans',sans-serif;color:#ffffff;letter-spacing:-0.505px;white-space:pre;will-change:transform">Parameters</div><div style="position:absolute;left:168.70px;top:319.91px;font:normal bold 32px/1 'Liberation Sans',sans-serif;color:#ffffff;letter-spacing:-1.228px;white-space:pre;will-change:transform">logs</div><div style="position:absolute;left:181.60px;top:391.20px;font:normal normal 28px/1 'Liberation Sans',sans-serif;color:#ffffff;letter-spacing:-0.448px;white-space:pre;will-change:transform">map</div><div style="position:absolute;left:267.90px;top:388.90px;font:normal normal 28px/1 'Liberation Sans',sans-serif;color:#ffffff;letter-spacing:0.985px;white-space:pre;will-change:transform">{ }</div><div style="position:absolute;left:198.30px;top:455.70px;font:normal normal 28px/1 'Liberation Sans',sans-serif;color:#ffffff;letter-spacing:-0.416px;white-space:pre;will-change:transform">string [@key = timeUnixN...</div><div style="position:absolute;left:198.30px;top:519.70px;font:normal normal 28px/1 'Liberation Sans',sans-serif;color:#ffffff;letter-spacing:-0.388px;white-space:pre;will-change:transform">string [@key = observedTi...</div><div style="position:absolute;left:197.30px;top:583.70px;font:normal normal 28px/1 'Liberation Sans',sans-serif;color:#ffffff;letter-spacing:-0.386px;white-space:pre;will-change:transform">number [@key = severity...</div><div style="position:absolute;left:198.30px;top:647.70px;font:normal normal 28px/1 'Liberation Sans',sans-serif;color:#ffffff;letter-spacing:-0.438px;white-space:pre;will-change:transform">string [@key = severityTe...</div><div style="position:absolute;left:208.20px;top:711.70px;font:normal normal 28px/1 'Liberation Sans',sans-serif;color:#ffffff;letter-spacing:-0.353px;white-space:pre;will-change:transform">map [@key = body]</div><div style="position:absolute;left:475.80px;top:709.10px;font:normal normal 28px/1 'Liberation Sans',sans-serif;color:#ffffff;letter-spacing:1.235px;white-space:pre;will-change:transform">{ }</div><div style="position:absolute;left:208.20px;top:775.70px;font:normal normal 28px/1 'Liberation Sans',sans-serif;color:#ffffff;letter-spacing:-0.118px;white-space:pre;will-change:transform">array [@key = attributes]</div><div style="position:absolute;left:541.80px;top:773.10px;font:normal normal 28px/1 'Liberation Sans',sans-serif;color:#ffffff;letter-spacing:3.171px;white-space:pre;will-change:transform">[ ]</div><div style="position:absolute;left:197.30px;top:839.70px;font:normal normal 28px/1 'Liberation Sans',sans-serif;color:#ffffff;letter-spacing:-0.417px;white-space:pre;will-change:transform">number [@key = dropped...</div><div style="position:absolute;left:197.30px;top:903.70px;font:normal normal 28px/1 'Liberation Sans',sans-serif;color:#ffffff;letter-spacing:-0.227px;white-space:pre;will-change:transform">number [@key = flags]</div><div style="position:absolute;left:198.30px;top:967.70px;font:normal normal 28px/1 'Liberation Sans',sans-serif;color:#ffffff;letter-spacing:-0.192px;white-space:pre;will-change:transform">string [@key = traceId]</div><div style="position:absolute;left:198.30px;top:1031.70px;font:normal normal 28px/1 'Liberation Sans',sans-serif;color:#ffffff;letter-spacing:-0.324px;white-space:pre;will-change:transform">string [@key = spanId]</div><div style="position:absolute;left:137.30px;top:1146.91px;font:normal bold 32px/1 'Liberation Sans',sans-serif;color:#ffffff;letter-spacing:-0.934px;white-space:pre;will-change:transform">Body</div><div style="position:absolute;left:874.50px;top:160.53px;font:normal bold 36px/1 'Liberation Sans',sans-serif;color:#ffffff;letter-spacing:-0.332px;white-space:pre;will-change:transform">Target</div><div style="position:absolute;left:977.70px;top:246.11px;font:normal bold 32px/1 'Liberation Sans',sans-serif;color:#ffffff;letter-spacing:-0.934px;white-space:pre;will-change:transform">Body</div><div style="position:absolute;left:988.00px;top:314.91px;font:normal normal 32px/1 'Liberation Sans',sans-serif;color:#ffffff;letter-spacing:0.273px;white-space:pre;will-change:transform">map</div><div style="position:absolute;left:1006.60px;top:379.21px;font:normal normal 32px/1 'Liberation Sans',sans-serif;color:#ffffff;letter-spacing:-0.169px;white-space:pre;will-change:transform">string [@key = timeUnixNano]</div><div style="position:absolute;left:1502.60px;top:381.30px;font:normal normal 28px/1 'Liberation Sans',sans-serif;color:#ffffff;letter-spacing:0.301px;white-space:pre;will-change:transform">$logs-x/fn:map/fn:string...</div><div style="position:absolute;left:1006.60px;top:443.21px;font:normal normal 32px/1 'Liberation Sans',sans-serif;color:#ffffff;letter-spacing:-0.153px;white-space:pre;will-change:transform">string [@key = observedTimeUnixNano]</div><div style="position:absolute;left:1644.00px;top:445.30px;font:normal normal 28px/1 'Liberation Sans',sans-serif;color:#ffffff;letter-spacing:0.139px;white-space:pre;will-change:transform">$logs-x/fn:m...</div><div style="position:absolute;left:1006.60px;top:507.21px;font:normal normal 32px/1 'Liberation Sans',sans-serif;color:#ffffff;letter-spacing:-0.149px;white-space:pre;will-change:transform">string [@key = severityText]</div><div style="position:absolute;left:1471.30px;top:509.30px;font:normal normal 28px/1 'Liberation Sans',sans-serif;color:#ffffff;letter-spacing:0.158px;white-space:pre;will-change:transform">$logs-x/fn:map/fn:string[@...</div><div style="position:absolute;left:1016.50px;top:571.21px;font:normal normal 32px/1 'Liberation Sans',sans-serif;color:#ffffff;letter-spacing:-0.438px;white-space:pre;will-change:transform">string [@key = message]</div><div style="position:absolute;left:1436.40px;top:573.30px;font:normal normal 28px/1 'Liberation Sans',sans-serif;color:#ffffff;letter-spacing:0.083px;white-space:pre;will-change:transform">$logs-x/fn:map/fn:map[@key...</div><div style="position:absolute;left:1006.70px;top:635.21px;font:normal normal 32px/1 'Liberation Sans',sans-serif;color:#ffffff;letter-spacing:-0.264px;white-space:pre;will-change:transform">string [@key = traceId]</div><div style="position:absolute;left:1398.90px;top:637.30px;font:normal normal 28px/1 'Liberation Sans',sans-serif;color:#ffffff;letter-spacing:0.111px;white-space:pre;will-change:transform">$logs-x/fn:map/fn:string[@key='t...</div><div style="position:absolute;left:1006.70px;top:699.21px;font:normal normal 32px/1 'Liberation Sans',sans-serif;color:#ffffff;letter-spacing:-0.422px;white-space:pre;will-change:transform">string [@key = spanId]</div><div style="position:absolute;left:1393.60px;top:701.30px;font:normal normal 28px/1 'Liberation Sans',sans-serif;color:#ffffff;letter-spacing:-0.019px;white-space:pre;will-change:transform">$logs-x/fn:map/fn:string[@key='s...</div><div style="position:absolute;left:1006.70px;top:763.21px;font:normal normal 32px/1 'Liberation Sans',sans-serif;color:#ffffff;letter-spacing:-0.156px;white-space:pre;will-change:transform">string [@key = type]</div><div style="position:absolute;left:1363.30px;top:765.30px;font:normal normal 28px/1 'Liberation Sans',sans-serif;color:#ffffff;letter-spacing:0.597px;white-space:pre;will-change:transform">'log'</div>
</div></body></html>
